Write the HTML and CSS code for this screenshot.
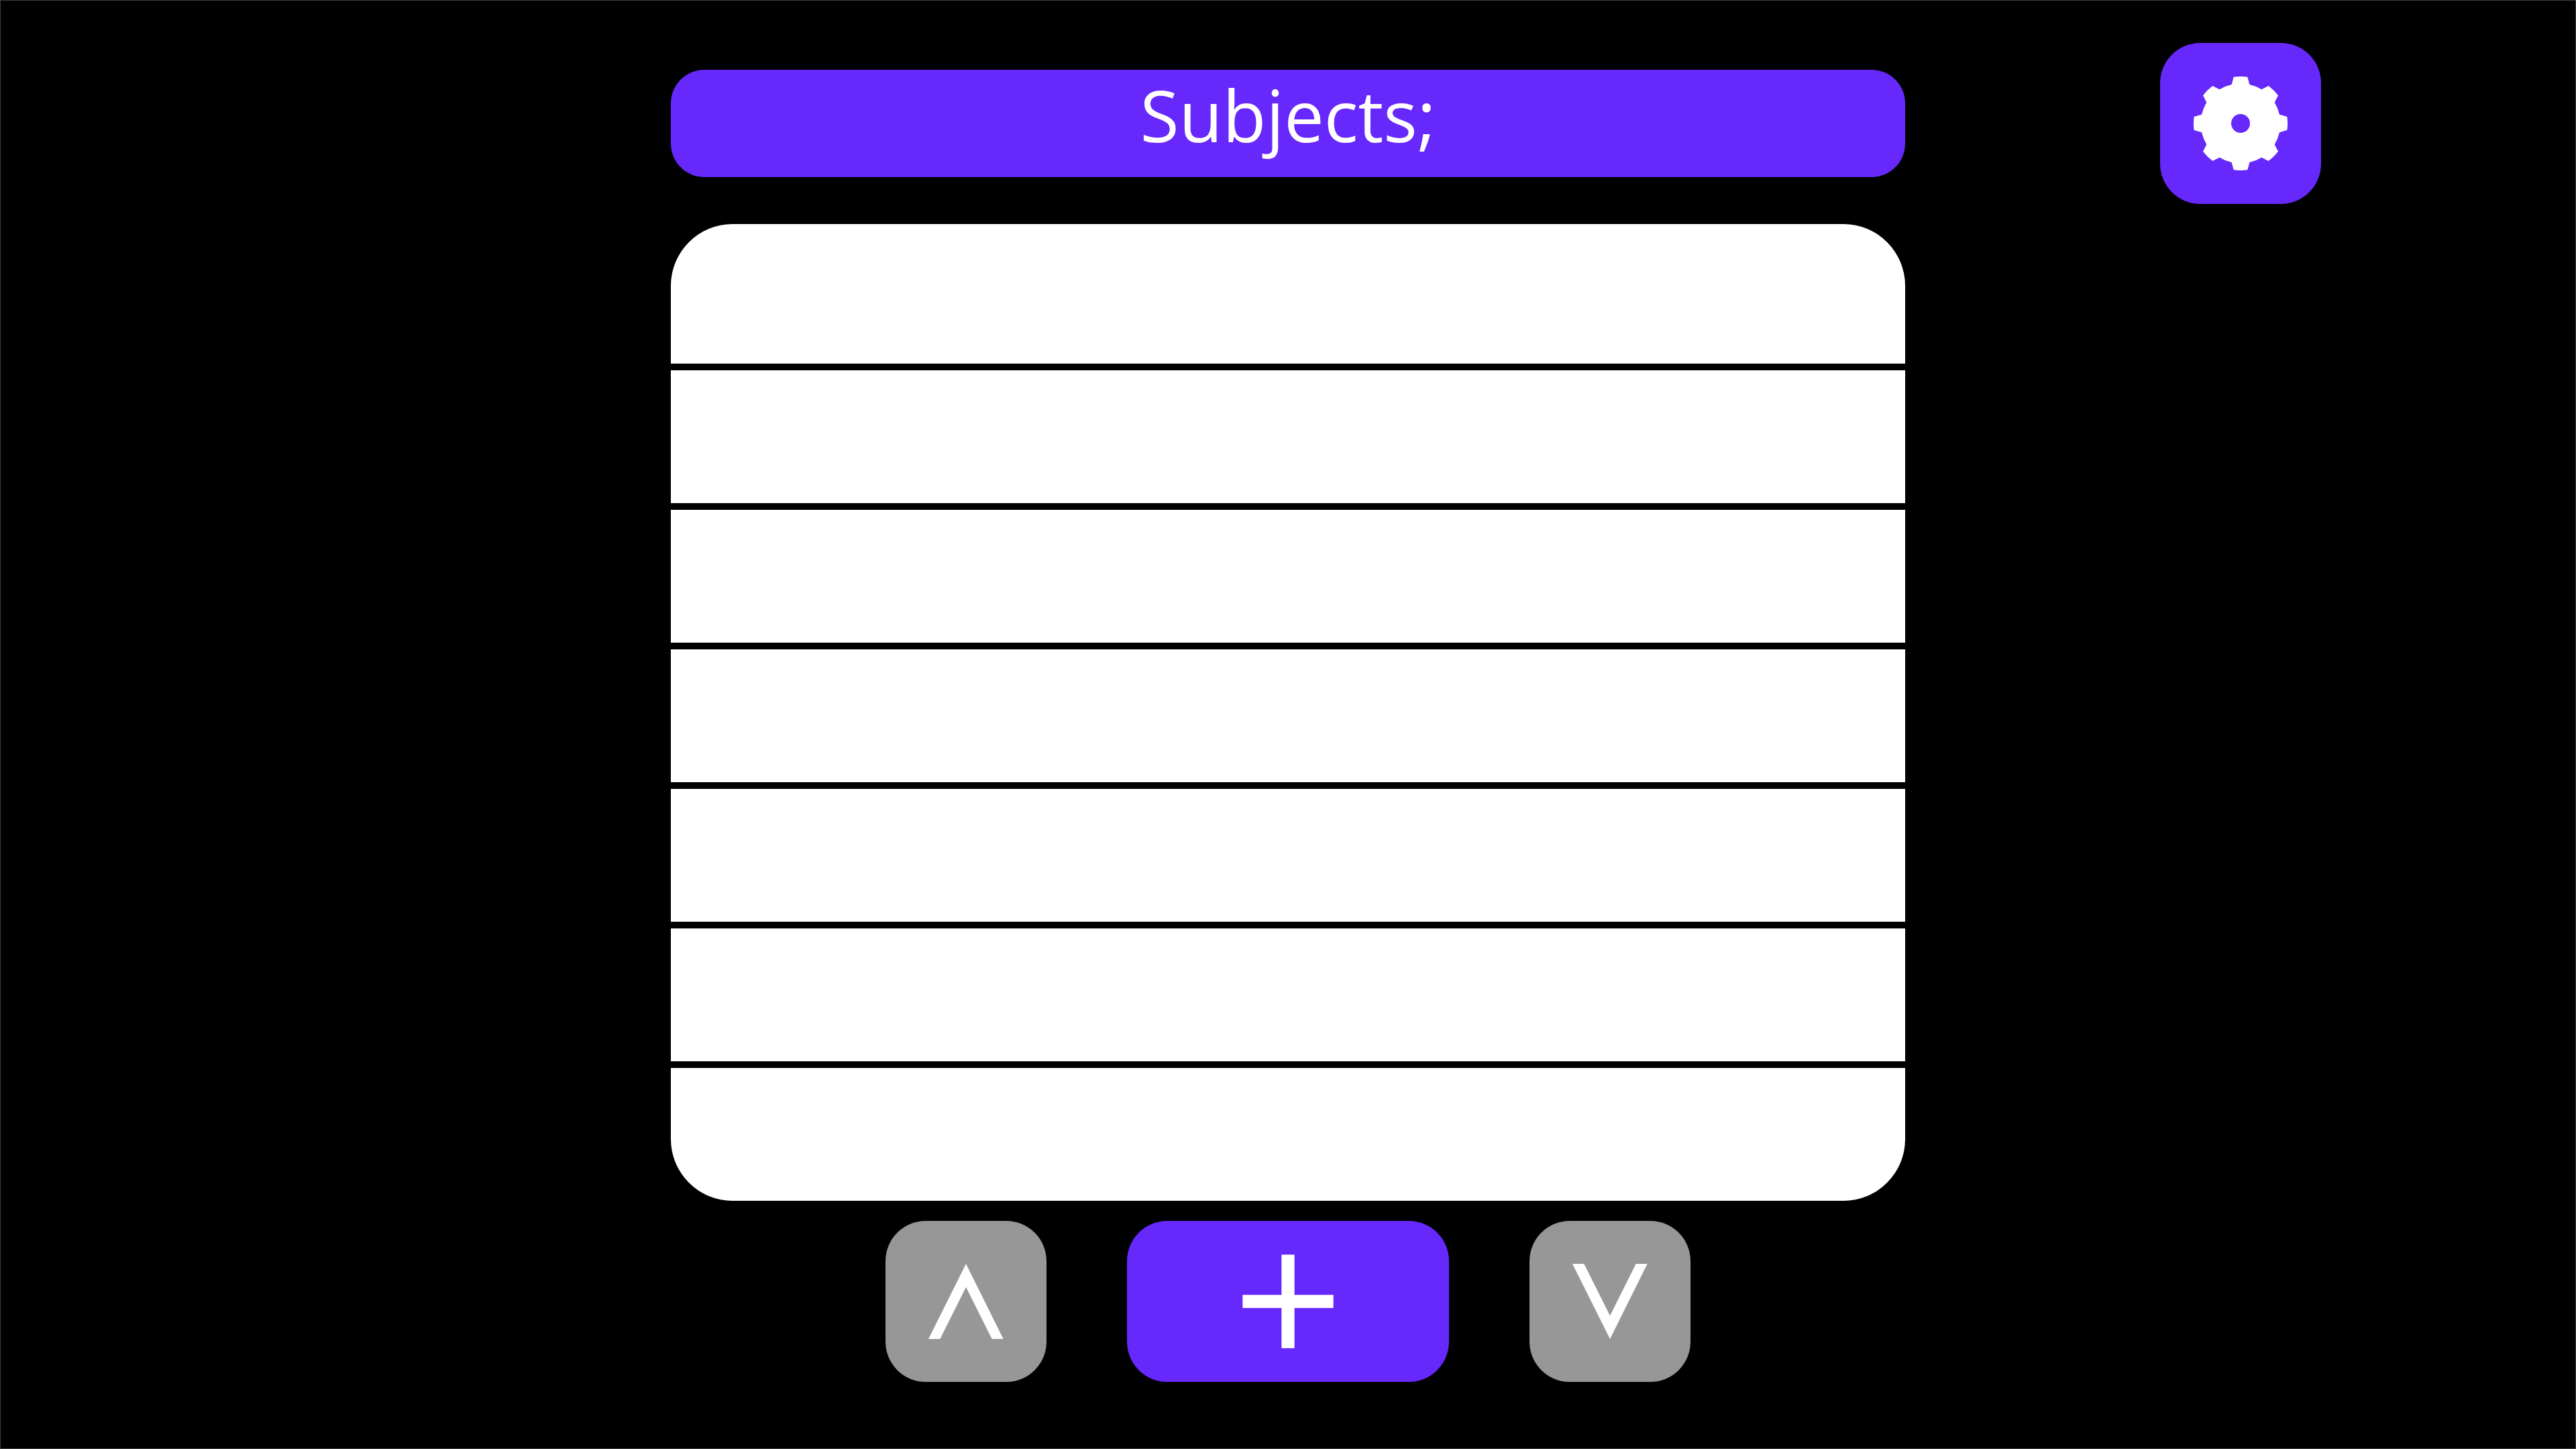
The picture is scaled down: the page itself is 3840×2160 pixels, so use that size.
FILE: index.html
```html
<!DOCTYPE html>
<html lang="en">
<head>
  <meta charset="utf-8">
  <meta name="viewport" content="width=device-width, initial-scale=1">
  <title>Subjects</title>
  <link rel="stylesheet" href="styles.css">
</head>
<body>
  <div class="app">
    <header class="header">
      <h1 class="title">Subjects;</h1>
      <button class="button button-settings" type="button" aria-label="Settings">
        <svg class="icon" viewBox="60 72 720 720" aria-hidden="true">
          <path fill-rule="evenodd" d="M380 258L389 224A210 210 0 0 1 451 224L460 258A178 178 0 0 1 514 280L545 264A210 210 0 0 1 588 307L572 338A178 178 0 0 1 594 392L628 402A210 210 0 0 1 628 462L594 472A178 178 0 0 1 572 526L588 557A210 210 0 0 1 545 600L514 584A178 178 0 0 1 460 606L451 640A210 210 0 0 1 389 640L380 606A178 178 0 0 1 326 584L295 600A210 210 0 0 1 252 557L268 526A178 178 0 0 1 246 472L212 462A210 210 0 0 1 212 402L246 392A178 178 0 0 1 268 338L252 307A210 210 0 0 1 295 264L326 280A178 178 0 0 1 380 258ZM378 432A42 42 0 0 0 462 432A42 42 0 0 0 378 432Z"/>
        </svg>
      </button>
    </header>
    <main class="content">
      <ul class="subjects" aria-label="Subjects">
        <li class="subject"></li>
        <li class="subject"></li>
        <li class="subject"></li>
        <li class="subject"></li>
        <li class="subject"></li>
        <li class="subject"></li>
        <li class="subject"></li>
      </ul>
      <div class="actions">
        <button class="button button-scroll" type="button" aria-label="Scroll up">
          <svg class="icon" viewBox="0 0 720 720" aria-hidden="true">
            <path d="M360 192L527 528H476L360 296L244 528H192Z"/>
          </svg>
        </button>
        <button class="button button-add" type="button" aria-label="Add subject">
          <svg class="icon" viewBox="0 0 720 720" aria-hidden="true">
            <path d="M331 151H389V331H563V389H389V569H331V389H157V331H331Z"/>
          </svg>
        </button>
        <button class="button button-scroll" type="button" aria-label="Scroll down">
          <svg class="icon" viewBox="0 0 720 720" aria-hidden="true">
            <path d="M360 528L527 192H476L360 424L244 192H192Z"/>
          </svg>
        </button>
      </div>
    </main>
  </div>
</body>
</html>
```
FILE: styles.css
```css
:root {
  --accent: #6728fc;
  --muted: #979797;
}

* {
  box-sizing: border-box;
}

body {
  margin: 0;
  background: #000;
  color: #fff;
  font-family: "Open Sans", sans-serif;
}

.app {
  display: flex;
  flex-direction: column;
  gap: 30px;
  min-height: 100vh;
  padding: 63px 0;
  border: 1px solid #404040;
}

.header,
.content {
  display: grid;
  grid-template-columns: 1fr minmax(0, 1840px) 1fr;
  align-items: center;
}

.title {
  grid-column: 2;
  height: 160px;
  margin: 0;
  border-radius: 50px;
  background: var(--accent);
  font-size: 106px;
  font-weight: 400;
  line-height: 134px;
  text-align: center;
}

.button {
  display: flex;
  align-items: center;
  justify-content: center;
  width: 240px;
  height: 240px;
  padding: 0;
  border: 0;
  border-radius: 60px;
  background: var(--accent);
  color: #fff;
  cursor: pointer;
}

.button-settings {
  grid-column: 3;
  justify-self: center;
}

.button-add {
  width: 480px;
}

.button-scroll {
  background: var(--muted);
}

.icon {
  width: 240px;
  height: 240px;
  fill: currentColor;
}

.content {
  row-gap: 30px;
}

.subjects {
  grid-column: 2;
  margin: 0;
  padding: 0;
  overflow: hidden;
  border-radius: 92px;
  background: #fff;
  color: #000;
  list-style: none;
}

.subject {
  height: 208px;
}

.subject + .subject {
  border-top: 10px solid #000;
}

.actions {
  grid-column: 2;
  display: flex;
  justify-content: center;
  gap: 120px;
}
```
